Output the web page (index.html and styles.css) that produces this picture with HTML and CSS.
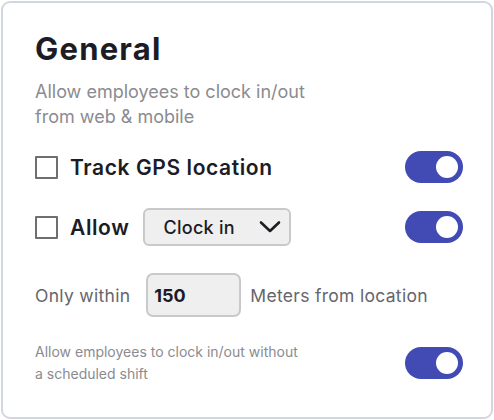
FILE: index.html
```html
<!DOCTYPE html>
<html>
<head>
<meta charset="utf-8">
<link rel="stylesheet" href="styles.css">
</head>
<body>
<div class="card">
  <h1 class="title">General</h1>
  <p class="subtitle">Allow employees to clock in/out<br>from web &amp; mobile</p>

  <div class="row row-gps">
    <label class="check-label"><span class="checkbox"></span><span class="bold">Track GPS location</span></label>
    <span class="toggle"><span class="knob"></span></span>
  </div>

  <div class="row row-allow">
    <div class="check-label">
      <span class="checkbox"></span><span class="bold">Allow</span>
      <div class="select">
        <span>Clock in</span>
        <svg class="chev" width="22" height="14" viewBox="0 0 22 14"><path d="M2 2.5 L11 11 L20 2.5" fill="none" stroke="#1c1c22" stroke-width="2.6" stroke-linecap="round" stroke-linejoin="round"/></svg>
      </div>
    </div>
    <span class="toggle"><span class="knob"></span></span>
  </div>

  <div class="row row-within">
    <span class="muted">Only within</span>
    <div class="input">150</div>
    <span class="muted">Meters from location</span>
  </div>

  <div class="row row-shift">
    <p class="small">Allow employees to clock in/out without<br>a scheduled shift</p>
    <span class="toggle"><span class="knob"></span></span>
  </div>
</div>
</body>
</html>
```

FILE: styles.css
```css
* { box-sizing: border-box; }
html, body { margin: 0; padding: 0; background: #ffffff; }
body { font-family: Inter, "Noto Sans", sans-serif; color: #1c1c24; }

.card {
  margin: 1px;
  width: 492px;
  height: 418px;
  border: 2px solid #d2d6e1;
  border-radius: 9px;
  padding: 27px 28px 0 32px;
  display: flex;
  flex-direction: column;
}

.title {
  margin: 0;
  font-size: 31px;
  line-height: 38px;
  font-weight: 700;
  letter-spacing: 1.2px;
  color: #1c1c26;
}

.subtitle {
  margin: 11px 0 0;
  font-size: 18px;
  line-height: 25px;
  color: #8b8b90;
  letter-spacing: 0;
}

.row {
  display: flex;
  align-items: center;
  justify-content: space-between;
}
.row-gps { margin-top: 18px; height: 40px; }
.row-allow { margin-top: 20px; height: 40px; }
.row-within { margin-top: 26px; height: 44px; justify-content: flex-start; }
.row-shift { margin-top: 24px; }

.check-label { display: flex; align-items: center; }
.checkbox {
  width: 23px; height: 23px;
  border: 2px solid #6f6f6f;
  border-radius: 1px;
  margin-right: 12px;
  flex: none;
}
.bold { font-size: 21px; font-weight: 600; letter-spacing: 0.6px; color: #1c1c26; }

.toggle {
  width: 58px; height: 32px;
  border-radius: 16px;
  background: #424bb4;
  display: flex;
  align-items: center;
  justify-content: flex-end;
  padding-right: 5px;
  flex: none;
}
.knob { width: 22px; height: 22px; border-radius: 50%; background: #fff; }

.select {
  margin-left: 14px;
  width: 148px; height: 38px;
  background: #efeff0;
  border: 2px solid #c9c9cb;
  border-radius: 6px;
  display: flex; align-items: center; justify-content: space-between;
  padding: 0 8px 0 18px;
  font-size: 18px; font-weight: 500; letter-spacing: 0.3px; color: #1c1c26;
}

.muted { font-size: 17.5px; color: #65656b; letter-spacing: 0.3px; }
.input {
  margin: 0 9px 0 16px;
  width: 95px; height: 44px;
  background: #efeff0;
  border: 2px solid #c9c9cb;
  border-radius: 7px;
  display: flex; align-items: center;
  padding-left: 6px;
  font-size: 18px; font-weight: 700; letter-spacing: 0; color: #1c1c26;
}

.small { margin: 0; font-size: 14px; line-height: 22px; color: #8b8b90; letter-spacing: 0; }
```
